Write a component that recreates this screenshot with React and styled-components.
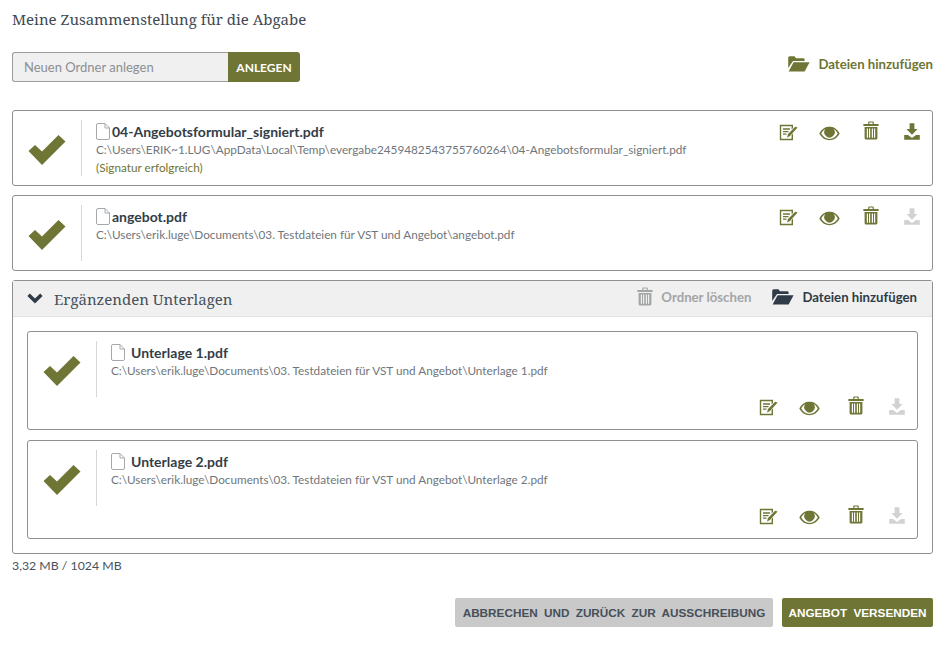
import React from 'react';
import styled, { createGlobalStyle } from 'styled-components';

const OLIVE = '#6e7535';

const GlobalStyle = createGlobalStyle`
  html, body {
    margin: 0;
    padding: 0;
    background: #fff;
  }
  body {
    font-family: Lato, "Noto Sans", sans-serif;
    color: #3c4650;
  }
`;

const CheckIcon = ({ size = 38 }) => (
  <svg width={size} height={size} viewBox="0 0 38 38">
    <path d="M.5 21 L7 15 L14 21.5 L30.5 5 L37.5 11.5 L14 35 Z" fill={OLIVE} />
  </svg>
);

const FileIcon = () => (
  <svg width="15" height="17" viewBox="0 0 15 17" fill="none" stroke="#a6a9ac" strokeWidth="1">
    <path d="M1.5 2 Q1.5 .5 3 .5 H10 L14.5 5 V15 Q14.5 16.5 13 16.5 H3 Q1.5 16.5 1.5 15 Z" />
    <path d="M10 .5 V5 H14.5" />
  </svg>
);

const EditIcon = ({ color = OLIVE }) => (
  <svg width="19" height="17" viewBox="0 0 19 17">
    <path d="M.8 .8 H14 V4 L12.6 5.4 V2.2 H2.2 V14.8 H12.6 V11 L14 9.6 V16.2 H.8 Z" fill={color} />
    <path d="M4 5 H11 M4 7.6 H9.5 M4 10.2 H7.5" stroke={color} strokeWidth="1.3" />
    <path d="M8 13.4 L9 10 L16.2 2.8 L18.6 3.6 L11 12 Z" fill={color} />
  </svg>
);

const EyeIcon = ({ color = OLIVE }) => (
  <svg width="21" height="15" viewBox="0 0 21 15">
    <path
      fillRule="evenodd"
      d="M.3 7.5 C3 2.6 6.6 .8 10.5 .8 C14.4 .8 18 2.6 20.7 7.5 C18 12.4 14.4 14.2 10.5 14.2 C6.6 14.2 3 12.4 .3 7.5 Z M2.2 7.5 C4.2 10.8 7 12.9 10.5 12.9 C14 12.9 16.8 10.8 18.8 7.5 C17.6 5.4 16.2 4 14.6 3 A5.2 5.2 0 1 1 6.4 3 C4.8 4 3.4 5.4 2.2 7.5 Z"
      fill={color}
    />
  </svg>
);

const TrashIcon = ({ color = OLIVE }) => (
  <svg width="16" height="19" viewBox="0 0 16 19">
    <path d="M.4 3 H5.2 V1.4 Q5.2 .4 6.2 .4 H9.8 Q10.8 .4 10.8 1.4 V3 H15.6 V5 H.4 Z M6.4 3 H9.6 V1.6 H6.4 Z" fill={color} fillRule="evenodd" />
    <path
      d="M1.6 6 H14.4 V17 Q14.4 18.6 12.8 18.6 H3.2 Q1.6 18.6 1.6 17 Z M3.8 7.6 V16.8 H5 V7.6 Z M6 7.6 V16.8 H7.2 V7.6 Z M8.8 7.6 V16.8 H10 V7.6 Z M11 7.6 V16.8 H12.2 V7.6 Z"
      fill={color}
      fillRule="evenodd"
    />
  </svg>
);

const DownloadIcon = ({ color = OLIVE }) => (
  <svg width="16" height="17" viewBox="0 0 16 17">
    <path d="M5.6 .3 H10.4 V6 H13.6 L8 11.8 L2.4 6 H5.6 Z" fill={color} />
    <path d="M.2 12 H4 L8 15 L12 12 H15.8 V16.7 H.2 Z" fill={color} />
  </svg>
);

const FolderIcon = ({ color = OLIVE }) => (
  <svg width="22" height="16" viewBox="0 0 22 16">
    <path d="M.2 1.8 Q.2 .3 1.7 .3 H6.4 L8 2.2 H15.4 Q16.6 2.2 16.6 3.6 V5 H5 L.2 12 Z" fill={color} />
    <path d="M5.6 6.2 H21.6 L16.6 15.6 H.6 Z" fill={color} />
  </svg>
);

const ChevronIcon = () => (
  <svg width="16" height="11" viewBox="0 0 16 11">
    <path d="M.4 3 L2.8 .6 L8 5.6 L13.2 .6 L15.6 3 L8 10.4 Z" fill="#2f3b47" />
  </svg>
);

const DISABLED = '#d2d3d0';

const FileCard = ({ name, path, note, downloadable, inner }) => (
  <Card $inner={inner}>
    <CheckCell $inner={inner}>
      <CheckIcon />
    </CheckCell>
    <FileBody>
      <FileName $inner={inner}>
        <FileIcon />
        <span>{name}</span>
      </FileName>
      <FilePath>{path}</FilePath>
      {note && <SignatureNote>{note}</SignatureNote>}
    </FileBody>
    <Actions $inner={inner}>
      <Action><EditIcon /></Action>
      <Action $lift={-2}><EyeIcon /></Action>
      <Action $lift={3}><TrashIcon /></Action>
      <Action $lift={1}><DownloadIcon color={downloadable ? OLIVE : DISABLED} /></Action>
    </Actions>
  </Card>
);

const App = () => (
  <Page>
    <GlobalStyle />
    <Title>Meine Zusammenstellung für die Abgabe</Title>
    <Toolbar>
      <FolderForm>
        <FolderInput placeholder="Neuen Ordner anlegen" />
        <CreateButton>ANLEGEN</CreateButton>
      </FolderForm>
      <ToolbarAdd>
        <AddFiles $color={OLIVE}>
          <FolderIcon />
          <span>Dateien hinzufügen</span>
        </AddFiles>
      </ToolbarAdd>
    </Toolbar>
    <CardList>
      <FileCard
        name="04-Angebotsformular_signiert.pdf"
        path="C:\Users\ERIK~1.LUG\AppData\Local\Temp\evergabe2459482543755760264\04-Angebotsformular_signiert.pdf"
        note="(Signatur erfolgreich)"
        downloadable
      />
      <FileCard
        name="angebot.pdf"
        path="C:\Users\erik.luge\Documents\03. Testdateien für VST und Angebot\angebot.pdf"
      />
      <Group>
        <GroupHeader>
          <GroupTitle>
            <ChevronIcon />
            <span>Ergänzenden Unterlagen</span>
          </GroupTitle>
          <GroupActions>
            <DeleteFolder>
              <TrashIcon color="#a3a5a6" />
              <span>Ordner löschen</span>
            </DeleteFolder>
            <AddFiles $color="#2f3b47">
              <FolderIcon color="#2f3b47" />
              <span>Dateien hinzufügen</span>
            </AddFiles>
          </GroupActions>
        </GroupHeader>
        <GroupBody>
          <FileCard
            inner
            name="Unterlage 1.pdf"
            path="C:\Users\erik.luge\Documents\03. Testdateien für VST und Angebot\Unterlage 1.pdf"
          />
          <FileCard
            inner
            name="Unterlage 2.pdf"
            path="C:\Users\erik.luge\Documents\03. Testdateien für VST und Angebot\Unterlage 2.pdf"
          />
        </GroupBody>
      </Group>
    </CardList>
    <Quota>3,32 MB / 1024 MB</Quota>
    <Footer>
      <CancelButton>ABBRECHEN UND ZURÜCK ZUR AUSSCHREIBUNG</CancelButton>
      <SendButton>ANGEBOT VERSENDEN</SendButton>
    </Footer>
  </Page>
);

const Page = styled.div`
  box-sizing: border-box;
  width: 944px;
  height: 646px;
  padding: 10px 11px 0 12px;
  overflow: hidden;
`;

const Title = styled.h1`
  margin: 0;
  height: 19px;
  font-family: "Noto Serif", "DejaVu Serif", "Liberation Serif", serif;
  font-size: 15px;
  line-height: 19px;
  font-weight: 400;
  color: #3f4a52;
`;

const Toolbar = styled.div`
  display: flex;
  justify-content: space-between;
  align-items: center;
  margin-top: 23px;
  height: 30px;
`;

const ToolbarAdd = styled.div`
  padding-bottom: 6px;
`;

const FolderForm = styled.div`
  display: flex;
  width: 288px;
  height: 30px;
`;

const FolderInput = styled.input`
  box-sizing: border-box;
  flex: 1;
  min-width: 0;
  height: 30px;
  padding: 0 11px;
  background: #f0f0f0;
  border: 1px solid #9c9c9c;
  border-right: none;
  border-radius: 3px 0 0 3px;
  font-family: inherit;
  font-size: 13px;
  outline: none;

  &::placeholder {
    color: #8b8f92;
    opacity: 1;
  }
`;

const CreateButton = styled.button`
  width: 72px;
  border: none;
  border-radius: 0 3px 3px 0;
  background: ${OLIVE};
  color: #fff;
  font-family: inherit;
  font-size: 12px;
  font-weight: 700;
  padding: 0;
`;

const AddFiles = styled.div`
  display: flex;
  align-items: center;
  gap: 8px;
  font-size: 13.2px;
  font-weight: 700;
  color: ${(p) => p.$color};
`;

const CardList = styled.div`
  display: flex;
  flex-direction: column;
  gap: 9px;
  margin-top: 28px;
`;

const Card = styled.div`
  box-sizing: border-box;
  display: flex;
  height: ${(p) => (p.$inner ? '99px' : '76px')};
  padding: 9px 0;
  background: #fff;
  border: 1px solid #8f8f8f;
  border-radius: 3px;
`;

const CheckCell = styled.div`
  display: flex;
  align-items: center;
  justify-content: center;
  flex: none;
  box-sizing: border-box;
  width: 69px;
  height: ${(p) => (p.$inner ? '56px' : 'auto')};
  padding-top: 1px;
  border-right: 1px solid #d6d6d6;
`;

const FileBody = styled.div`
  flex: 1;
  min-width: 0;
  padding-left: 14px;
  padding-top: 2px;
`;

const FileName = styled.div`
  display: flex;
  align-items: center;
  gap: ${(p) => (p.$inner ? '6px' : '2px')};
  height: 19px;
  font-size: 14px;
  font-weight: 700;
  color: #333d47;

  svg {
    margin-left: -1px;
  }
`;

const FilePath = styled.div`
  height: 18px;
  font-size: 11.75px;
  line-height: 18px;
  color: #70767b;
  white-space: nowrap;
`;

const SignatureNote = styled.div`
  height: 18px;
  font-size: 11.75px;
  line-height: 18px;
  color: ${OLIVE};
`;

const Actions = styled.div`
  display: flex;
  flex: none;
  align-self: ${(p) => (p.$inner ? 'flex-end' : 'flex-start')};
  margin-top: ${(p) => (p.$inner ? '0' : '1px')};
  margin-bottom: ${(p) => (p.$inner ? '2px' : '0')};

  ${(p) => p.$inner && `
    span:nth-child(3) {
      margin-left: 5px;
    }
  `}
`;

const Action = styled.span`
  display: flex;
  align-items: center;
  justify-content: center;
  width: 41px;
  height: 22px;

  svg {
    margin-bottom: ${(p) => p.$lift || 0}px;
  }
`;

const Group = styled.div`
  box-sizing: border-box;
  height: 274px;
  border: 1px solid #8f8f8f;
  border-radius: 3px;
`;

const GroupHeader = styled.div`
  box-sizing: border-box;
  display: flex;
  justify-content: space-between;
  align-items: center;
  height: 36px;
  padding: 0 15px 0 14px;
  background: #f0f0f0;
  border-bottom: 1px solid #e2e2e2;
`;

const GroupTitle = styled.div`
  display: flex;
  align-items: center;
  gap: 11px;
  font-family: "Noto Serif", "DejaVu Serif", "Liberation Serif", serif;
  font-size: 15px;
  color: #46505a;
`;

const GroupActions = styled.div`
  display: flex;
  align-items: center;
  gap: 21px;
  padding-bottom: 4px;
`;

const DeleteFolder = styled.div`
  display: flex;
  align-items: center;
  gap: 8px;
  font-size: 13.2px;
  font-weight: 700;
  color: #a3a5a6;
`;

const GroupBody = styled.div`
  display: flex;
  flex-direction: column;
  gap: 10px;
  padding: 14px 14px 0;
`;

const Quota = styled.div`
  margin-top: 4px;
  height: 16px;
  font-size: 12.3px;
  line-height: 16px;
  color: #4a535b;
`;

const Footer = styled.div`
  display: flex;
  justify-content: flex-end;
  gap: 9px;
  margin-top: 24px;
`;

const FooterButton = styled.button`
  height: 29px;
  padding: 0;
  border: none;
  border-radius: 2px;
  font-family: "Liberation Sans", sans-serif;
  font-size: 11.75px;
  font-weight: 700;
  word-spacing: 3px;
  white-space: nowrap;
`;

const CancelButton = styled(FooterButton)`
  width: 318px;
  background: #c9c9c9;
  color: #46505a;
`;

const SendButton = styled(FooterButton)`
  width: 151px;
  background: ${OLIVE};
  color: #fff;
`;

export default App;
